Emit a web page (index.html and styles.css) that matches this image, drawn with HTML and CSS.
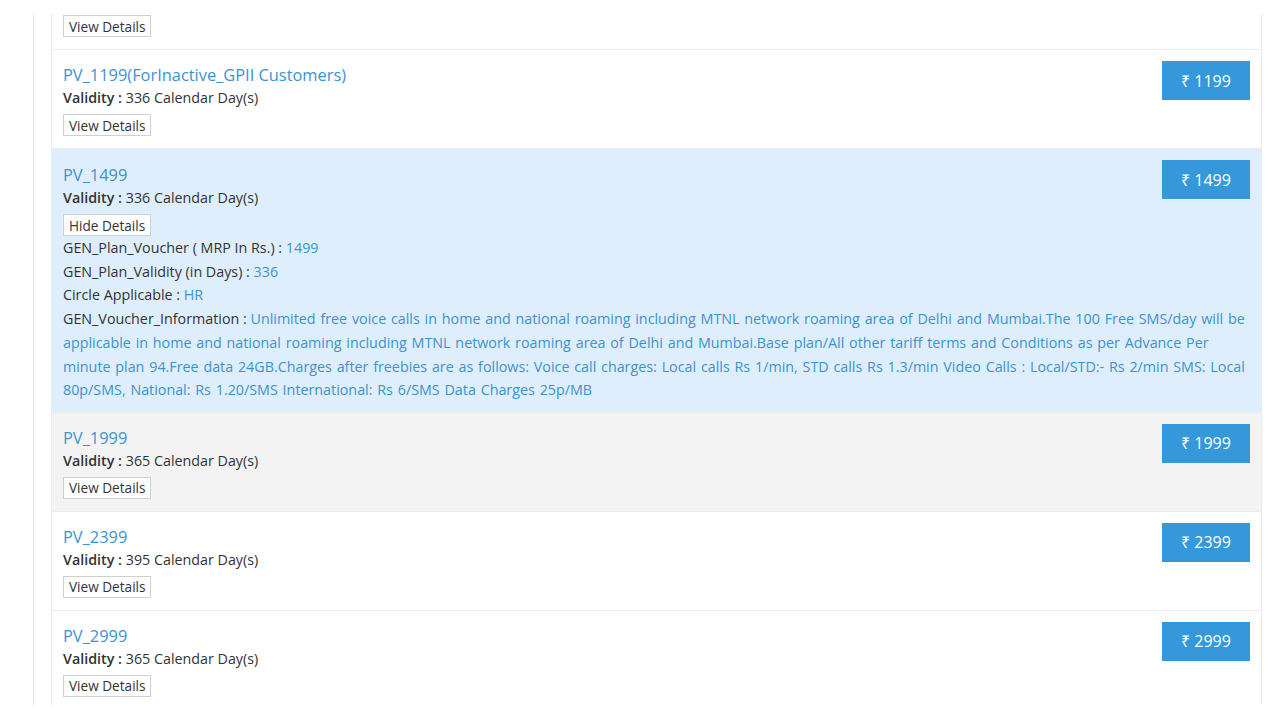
FILE: index.html
```html
<!DOCTYPE html>
<html lang="en">
<head>
    <meta charset="UTF-8">
    <meta name="viewport" content="width=device-width, initial-scale=1.0">
    <title>Plan Vouchers</title>
    <link rel="stylesheet" href="styles.css">
</head>
<body>
    <div class="page">
        <div class="plan-list">
            <div class="plan plan-cut">
                <button class="details-btn">View Details</button>
            </div>
            <div class="plan">
                <div class="plan-head">
                    <div class="plan-info">
                        <div class="plan-name">PV_1199(ForInactive_GPII Customers)</div>
                        <div class="plan-validity"><b>Validity :</b> 336 Calendar Day(s)</div>
                        <button class="details-btn">View Details</button>
                    </div>
                    <button class="price-btn">&#8377; 1199</button>
                </div>
            </div>
            <div class="plan plan-open">
                <div class="plan-head">
                    <div class="plan-info">
                        <div class="plan-name">PV_1499</div>
                        <div class="plan-validity"><b>Validity :</b> 336 Calendar Day(s)</div>
                        <button class="details-btn">Hide Details</button>
                    </div>
                    <button class="price-btn">&#8377; 1499</button>
                </div>
                <div class="plan-details">
                    <div>GEN_Plan_Voucher ( MRP In Rs.) : <span class="val">1499</span></div>
                    <div>GEN_Plan_Validity (in Days) : <span class="val">336</span></div>
                    <div>Circle Applicable : <span class="val">HR</span></div>
                    <div>GEN_Voucher_Information : <span class="val info">Unlimited free voice calls in home and national roaming including MTNL network roaming area of Delhi and Mumbai.The 100 Free SMS/day will be applicable in home and national roaming including MTNL network roaming area of Delhi and Mumbai.Base plan/All other tariff terms and Conditions as per Advance Per minute plan 94.Free data 24GB.Charges after freebies are as follows: Voice call charges: Local calls Rs 1/min, STD calls Rs 1.3/min Video Calls : Local/STD:- Rs 2/min SMS: Local 80p/SMS, National: Rs 1.20/SMS International: Rs 6/SMS Data Charges 25p/MB</span></div>
                </div>
            </div>
            <div class="plan plan-hover">
                <div class="plan-head">
                    <div class="plan-info">
                        <div class="plan-name">PV_1999</div>
                        <div class="plan-validity"><b>Validity :</b> 365 Calendar Day(s)</div>
                        <button class="details-btn">View Details</button>
                    </div>
                    <button class="price-btn">&#8377; 1999</button>
                </div>
            </div>
            <div class="plan">
                <div class="plan-head">
                    <div class="plan-info">
                        <div class="plan-name">PV_2399</div>
                        <div class="plan-validity"><b>Validity :</b> 395 Calendar Day(s)</div>
                        <button class="details-btn">View Details</button>
                    </div>
                    <button class="price-btn">&#8377; 2399</button>
                </div>
            </div>
            <div class="plan">
                <div class="plan-head">
                    <div class="plan-info">
                        <div class="plan-name">PV_2999</div>
                        <div class="plan-validity"><b>Validity :</b> 365 Calendar Day(s)</div>
                        <button class="details-btn">View Details</button>
                    </div>
                    <button class="price-btn">&#8377; 2999</button>
                </div>
            </div>
        </div>
    </div>
</body>
</html>
```

FILE: styles.css
```css
body {
    margin: 0;
    padding: 14px 0 0 0;
    font-family: "Open Sans", Arial, sans-serif;
    font-size: 14.3px;
    color: #333;
    background-color: #fff;
}
.page {
    margin-left: 33px;
    padding-left: 17px;
    border-left: 1px solid #e4e4e4;
    height: 691px;
    overflow: hidden;
}
.plan-list {
    width: 1209px;
    border-left: 1px solid #ececec;
    border-right: 1px solid #ececec;
}
.plan {
    padding: 14px 11px 12px 11px;
    border-bottom: 1px solid #ececec;
}
.plan-cut {
    padding-top: 1px;
}
.plan-open {
    background-color: #dfeefc;
    padding-top: 15px;
    padding-bottom: 10px;
}
.plan-hover {
    background-color: #f3f3f3;
}
.plan-head {
    display: flex;
    justify-content: space-between;
    align-items: flex-start;
}
.plan-info {
    flex: 1;
    min-width: 0;
}
.plan-name {
    font-size: 16.4px;
    line-height: 22px;
    color: #3b93d1;
}
.plan-validity {
    line-height: 24px;
}
.plan-validity b {
    font-weight: 600;
}
.details-btn {
    display: block;
    margin-top: 4px;
    height: 22px;
    padding: 0 5px;
    font-family: "Open Sans", Arial, sans-serif;
    font-size: 13.6px;
    color: #333;
    background-color: #fff;
    border: 1px solid #cfcfcf;
    border-radius: 0;
}
.plan-cut .details-btn {
    margin-top: 0;
}
.plan-details {
    line-height: 23.7px;
}
.plan-details .val {
    color: #3b93d1;
}
.plan-details .info {
    word-spacing: 1.1px;
}
.price-btn {
    margin-top: -3px;
    width: 88px;
    height: 39px;
    font-family: "Open Sans", Arial, sans-serif;
    font-size: 16px;
    color: #fff;
    background-color: #3498db;
    border: none;
    border-radius: 0;
    flex-shrink: 0;
}
.plan-open .price-btn {
    margin-top: -4px;
}
```
